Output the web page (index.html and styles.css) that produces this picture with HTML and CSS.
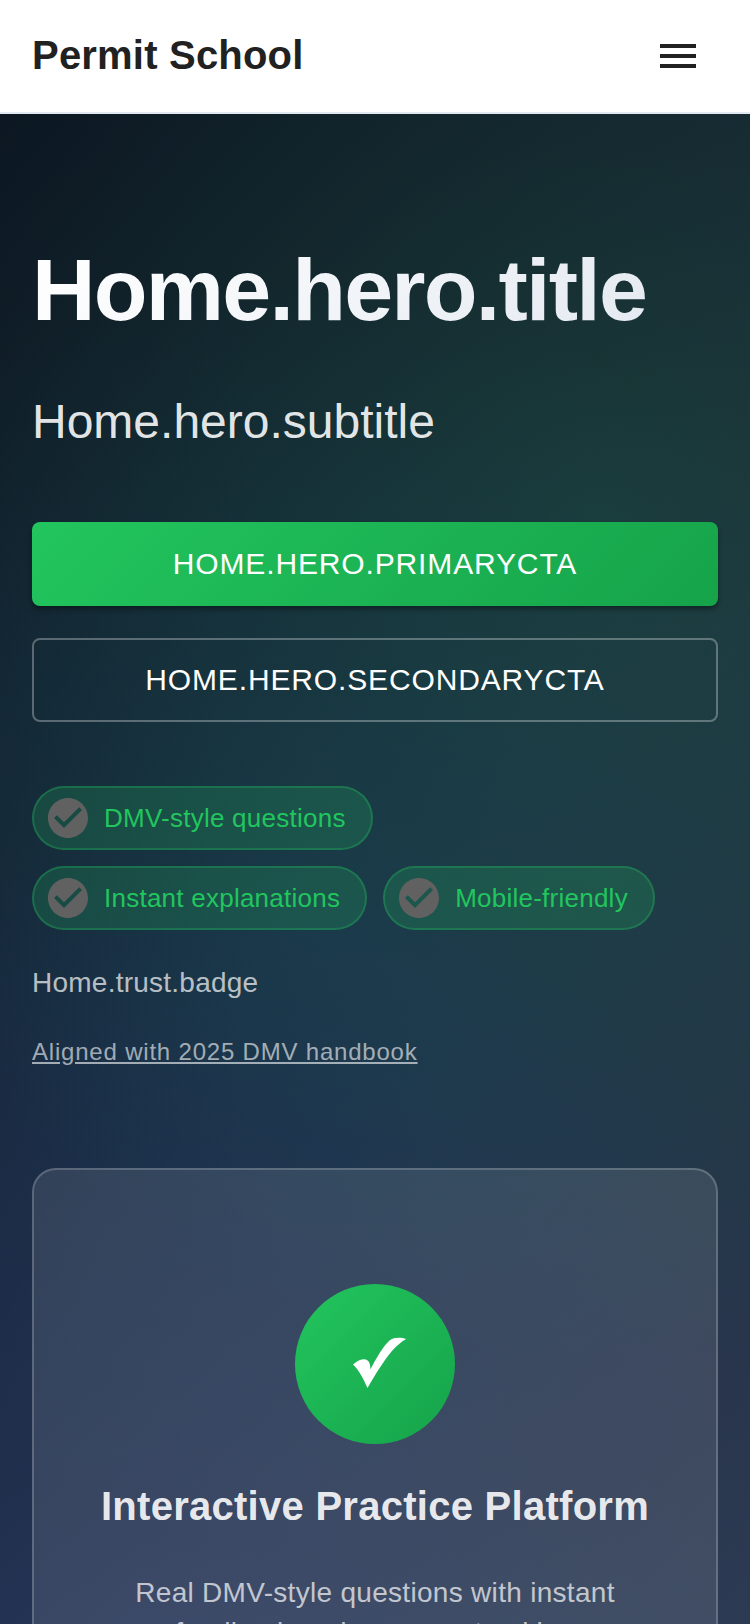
FILE: index.html
```html
<!DOCTYPE html>
<html lang="en">
<head>
<meta charset="utf-8">
<title>Permit School</title>
<link rel="stylesheet" href="styles.css">
</head>
<body>
<header class="appbar">
  <div class="brand">Permit School</div>
  <button class="menu" aria-label="Menu">
    <svg viewBox="0 0 24 24"><path d="M3 18h18v-2H3v2zm0-5h18v-2H3v2zm0-7v2h18V6H3z"/></svg>
  </button>
</header>
<main class="hero">
  <h1 class="title">Home.hero.title</h1>
  <h2 class="subtitle">Home.hero.subtitle</h2>
  <div class="actions">
    <a class="btn primary">Home.hero.primaryCta</a>
    <a class="btn outlined">Home.hero.secondaryCta</a>
  </div>
  <div class="chips">
    <div class="chip"><svg viewBox="2 2 20 20"><path d="M12 2C6.48 2 2 6.48 2 12s4.48 10 10 10 10-4.48 10-10S17.52 2 12 2zm-2 15-5-5 1.41-1.41L10 14.17l7.59-7.59L19 8l-9 9z"/></svg><span>DMV-style questions</span></div>
    <div class="chip"><svg viewBox="2 2 20 20"><path d="M12 2C6.48 2 2 6.48 2 12s4.48 10 10 10 10-4.48 10-10S17.52 2 12 2zm-2 15-5-5 1.41-1.41L10 14.17l7.59-7.59L19 8l-9 9z"/></svg><span>Instant explanations</span></div>
    <div class="chip"><svg viewBox="2 2 20 20"><path d="M12 2C6.48 2 2 6.48 2 12s4.48 10 10 10 10-4.48 10-10S17.52 2 12 2zm-2 15-5-5 1.41-1.41L10 14.17l7.59-7.59L19 8l-9 9z"/></svg><span>Mobile-friendly</span></div>
  </div>
  <p class="badge">Home.trust.badge</p>
  <a class="aligned">Aligned with 2025 DMV handbook</a>
  <section class="card">
    <div class="circle">
      <svg viewBox="0 0 160 160"><path d="M58 80.500C62 77 65.500 75.300 69.500 75.300C73.500 75.800 75.700 79.500 75.300 85.500C82 73 88 62.500 94.500 56.500C99 53 106 53.500 111.200 55C101 60.500 92.500 72 86 82C80.500 90 76.500 97 72.500 104C68.500 95 64 86 58 80.500Z"/></svg>
    </div>
    <h3 class="card-title">Interactive Practice Platform</h3>
    <p class="card-text">Real DMV-style questions with instant feedback and progress tracking</p>
  </section>
</main>
</body>
</html>
```
FILE: styles.css
```css
* { box-sizing: border-box; }
html { overflow: hidden; }
body {
  margin: 0;
  height: 1624px;
  overflow: hidden;
  font-family: "Liberation Sans", Arial, sans-serif;
  color: #fff;
}
.appbar {
  height: 114px;
  padding: 0 48px 0 32px;
  display: flex;
  align-items: center;
  justify-content: space-between;
  background: #fff;
  border-bottom: 2px solid #e2e8f0;
}
.brand {
  color: #212121;
  font-size: 40px;
  font-weight: 700;
  line-height: 64px;
  letter-spacing: 0.2px;
  padding-bottom: 3px;
}
.menu {
  display: flex;
  padding: 0;
  border: 0;
  background: none;
}
.menu svg { width: 48px; height: 48px; fill: #212121; }
.hero {
  display: flex;
  flex-direction: column;
  align-items: flex-start;
  height: 2000px;
  padding: 128px 32px;
  background:
    radial-gradient(circle at 20% 80%, rgba(59, 105, 246, 0.14) 0%, transparent 50%),
    radial-gradient(circle at 80% 20%, rgba(34, 197, 94, 0.15) 0%, transparent 50%),
    radial-gradient(circle at 40% 40%, rgba(14, 155, 233, 0.1) 0%, transparent 50%),
    linear-gradient(135deg, #0b1220 0%, #1e293b 50%, #334155 100%);
}
.title {
  margin: 0;
  width: 100%;
  font-size: 88px;
  font-weight: 700;
  line-height: 96.8px;
  letter-spacing: -1.76px;
  background: linear-gradient(135deg, #fff 0%, #e2e8f0 100%);
  -webkit-background-clip: text;
  background-clip: text;
  color: transparent;
}
.subtitle {
  margin: 48px 0 0;
  padding-top: 1px;
  font-size: 48px;
  font-weight: 400;
  line-height: 67px;
  color: rgba(255, 255, 255, 0.9);
}
.actions {
  display: flex;
  flex-direction: column;
  gap: 32px;
  width: 100%;
  margin-top: 67px;
}
.btn {
  display: flex;
  align-items: center;
  justify-content: center;
  height: 84px;
  border-radius: 8px;
  font-size: 30px;
  letter-spacing: 0.857px;
  text-transform: uppercase;
}
.primary {
  background: linear-gradient(135deg, #22c55e 0%, #16a34a 100%);
  box-shadow: 0 3px 5px rgba(0, 0, 0, 0.4);
}
.outlined { border: 2px solid rgba(255, 255, 255, 0.3); }
.chips {
  display: flex;
  flex-wrap: wrap;
  gap: 16px;
  width: 100%;
  margin-top: 64px;
}
.chip {
  display: flex;
  align-items: center;
  gap: 16px;
  height: 64px;
  padding: 0 25px 0 14px;
  border: 2px solid rgba(34, 197, 94, 0.3);
  border-radius: 32px;
  background: rgba(34, 197, 94, 0.2);
  color: #22c55e;
  font-size: 26px;
  letter-spacing: 0.244px;
}
.chip span { padding-top: 2px; }
.chip svg { width: 40px; height: 40px; fill: #616161; }
.badge {
  margin: 33px 0 0;
  font-size: 28px;
  line-height: 40px;
  letter-spacing: 0.24px;
  color: rgba(255, 255, 255, 0.7);
}
.aligned {
  margin-top: 29px;
  font-size: 24px;
  line-height: 40px;
  letter-spacing: 0.8px;
  color: rgba(255, 255, 255, 0.6);
  text-decoration: underline;
}
.card {
  display: flex;
  flex-direction: column;
  align-items: center;
  flex: none;
  width: 686px;
  height: 690px;
  margin-top: 96px;
  padding: 114px 64px;
  border: 2px solid rgba(255, 255, 255, 0.2);
  border-radius: 24px;
  background: rgba(255, 255, 255, 0.1);
}
.circle {
  width: 160px;
  height: 160px;
  border-radius: 50%;
  background: linear-gradient(135deg, #22c55e 0%, #16a34a 100%);
}
.circle svg { display: block; fill: #fff; }
.card-title {
  margin: 30px 0 0;
  font-size: 40px;
  line-height: 64px;
  letter-spacing: 0.27px;
  color: rgba(255, 255, 255, 0.9);
  white-space: nowrap;
}
.card-text {
  width: 500px;
  margin: 35px 0 0;
  font-size: 28px;
  line-height: 40px;
  letter-spacing: 0.3px;
  text-align: center;
  color: rgba(255, 255, 255, 0.7);
}
```
